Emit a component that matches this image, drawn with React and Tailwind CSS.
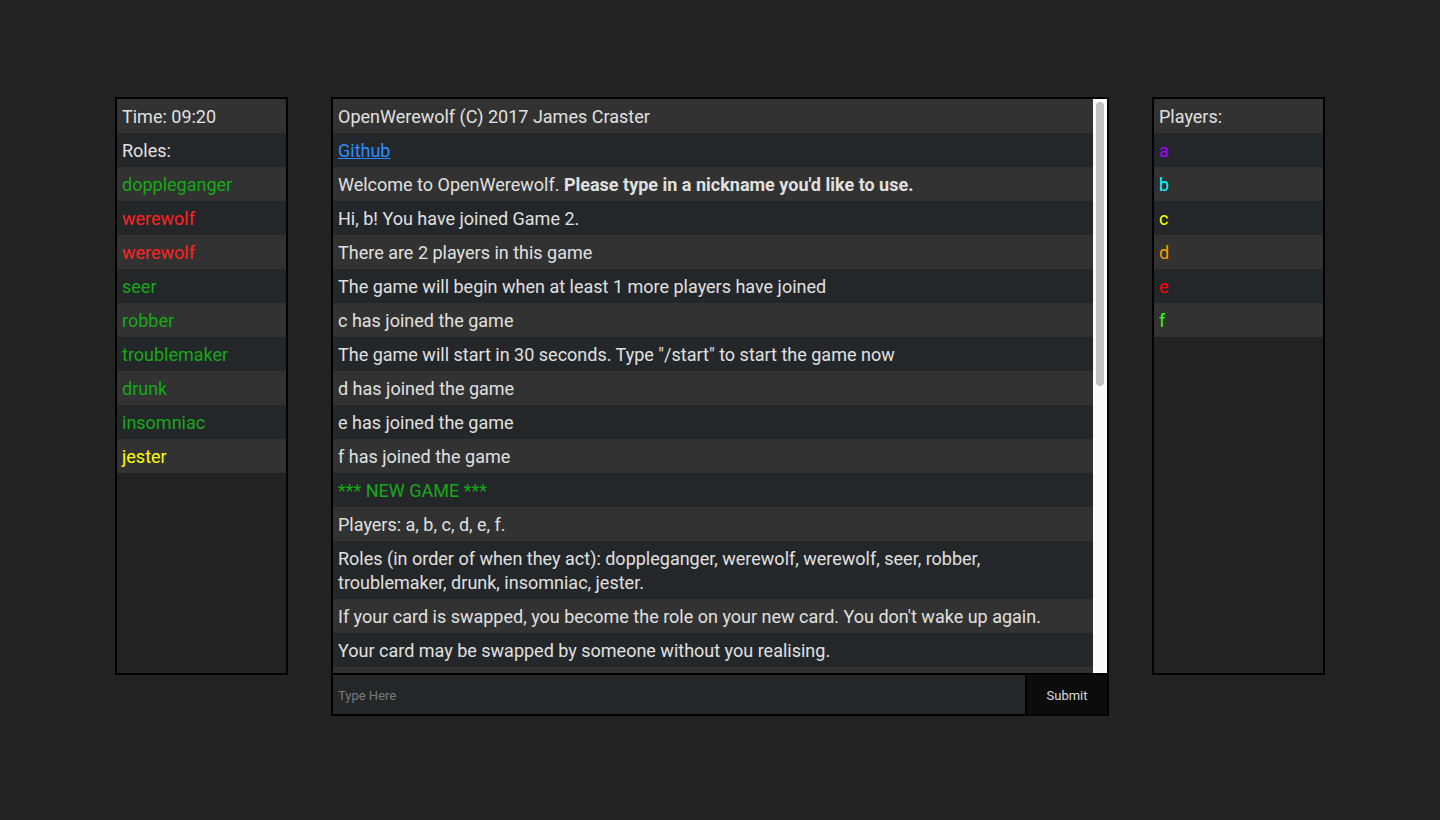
import { useState } from "react";

const ROLES = [
  { name: "doppleganger", color: "text-[#17a817]" },
  { name: "werewolf", color: "text-[#ff2222]" },
  { name: "werewolf", color: "text-[#ff2222]" },
  { name: "seer", color: "text-[#17a817]" },
  { name: "robber", color: "text-[#17a817]" },
  { name: "troublemaker", color: "text-[#17a817]" },
  { name: "drunk", color: "text-[#17a817]" },
  { name: "insomniac", color: "text-[#17a817]" },
  { name: "jester", color: "text-[#ffff00]" },
];

const PLAYERS = [
  { name: "a", color: "text-[#aa00ff]" },
  { name: "b", color: "text-[#00ffff]" },
  { name: "c", color: "text-[#ffff00]" },
  { name: "d", color: "text-[#ff9900]" },
  { name: "e", color: "text-[#ff0000]" },
  { name: "f", color: "text-[#33ff00]" },
];

const MESSAGES = [
  { text: "OpenWerewolf (C) 2017 James Craster" },
  { link: "Github" },
  { text: "Welcome to OpenWerewolf. ", bold: "Please type in a nickname you'd like to use." },
  { text: "Hi, b! You have joined Game 2." },
  { text: "There are 2 players in this game" },
  { text: "The game will begin when at least 1 more players have joined" },
  { text: "c has joined the game" },
  { text: 'The game will start in 30 seconds. Type "/start" to start the game now' },
  { text: "d has joined the game" },
  { text: "e has joined the game" },
  { text: "f has joined the game" },
  { text: "*** NEW GAME ***", color: "text-[#17a817]" },
  { text: "Players: a, b, c, d, e, f." },
  { text: "Roles (in order of when they act): doppleganger, werewolf, werewolf, seer, robber, troublemaker, drunk, insomniac, jester." },
  { text: "If your card is swapped, you become the role on your new card. You don't wake up again." },
  { text: "Your card may be swapped by someone without you realising." },
  { text: "" },
];

function Row({ i, children, className = "" }) {
  const bg = i % 2 === 0 ? "bg-[#323232]" : "bg-[#24272a]";
  return (
    <div className={`${bg} px-[5px] pt-[6px] pb-[4px] leading-[24px] ${className}`}>
      {children}
    </div>
  );
}

function SidePanel({ header, items }) {
  return (
    <div className="w-[173px] h-[578px] border-2 border-black bg-[#222222] flex flex-col">
      <Row i={0}>{header}</Row>
      {items}
    </div>
  );
}

export default function App() {
  const [msg, setMsg] = useState("");

  return (
    <div
      className="min-h-[820px] bg-[#222222] text-[#e0e0e0] text-[18px] flex justify-center items-start pt-[97px] gap-[43px]"
      style={{ fontFamily: 'Roboto, "Noto Sans", sans-serif' }}
    >
      <SidePanel
        header="Time: 09:20"
        items={[
          <Row key="roles" i={1}>Roles:</Row>,
          ...ROLES.map((r, idx) => (
            <Row key={idx} i={idx} className={r.color}>
              {r.name}
            </Row>
          )),
        ]}
      />

      {/* chat */}
      <div className="w-[778px] border-2 border-black flex flex-col">
        <div className="flex h-[574px]">
          <div className="flex-1 overflow-hidden bg-[#323232]">
            {MESSAGES.map((m, idx) => (
              <Row key={idx} i={idx} className={m.color || ""}>
                {m.link ? (
                  <a href="#" className="text-[#2f8cff] underline">
                    {m.link}
                  </a>
                ) : (
                  <>
                    {m.text || "\u00a0"}
                    {m.bold && <span className="font-bold">{m.bold}</span>}
                  </>
                )}
              </Row>
            ))}
          </div>
          {/* scrollbar */}
          <div className="w-[14px] bg-[#fafafa] px-[3px] pt-[3px]">
            <div className="h-[284px] rounded-full bg-[#c1c1c1]" />
          </div>
        </div>
        <div className="flex border-t-2 border-black h-[41px]">
          <input
            value={msg}
            onChange={(e) => setMsg(e.target.value)}
            placeholder="Type Here"
            className="flex-1 bg-[#24272a] text-[13px] px-[5px] pt-[2px] text-[#dcdcdc] placeholder:text-[#7a7a7a] outline-none border-r-2 border-black"
          />
          <button className="w-[80px] bg-[#0c0c0c] text-[13px] pt-[2px] text-[#dcdcdc]">
            Submit
          </button>
        </div>
      </div>

      <SidePanel
        header="Players:"
        items={PLAYERS.map((p, idx) => (
          <Row key={idx} i={idx + 1} className={p.color}>
            {p.name}
          </Row>
        ))}
      />
    </div>
  );
}
